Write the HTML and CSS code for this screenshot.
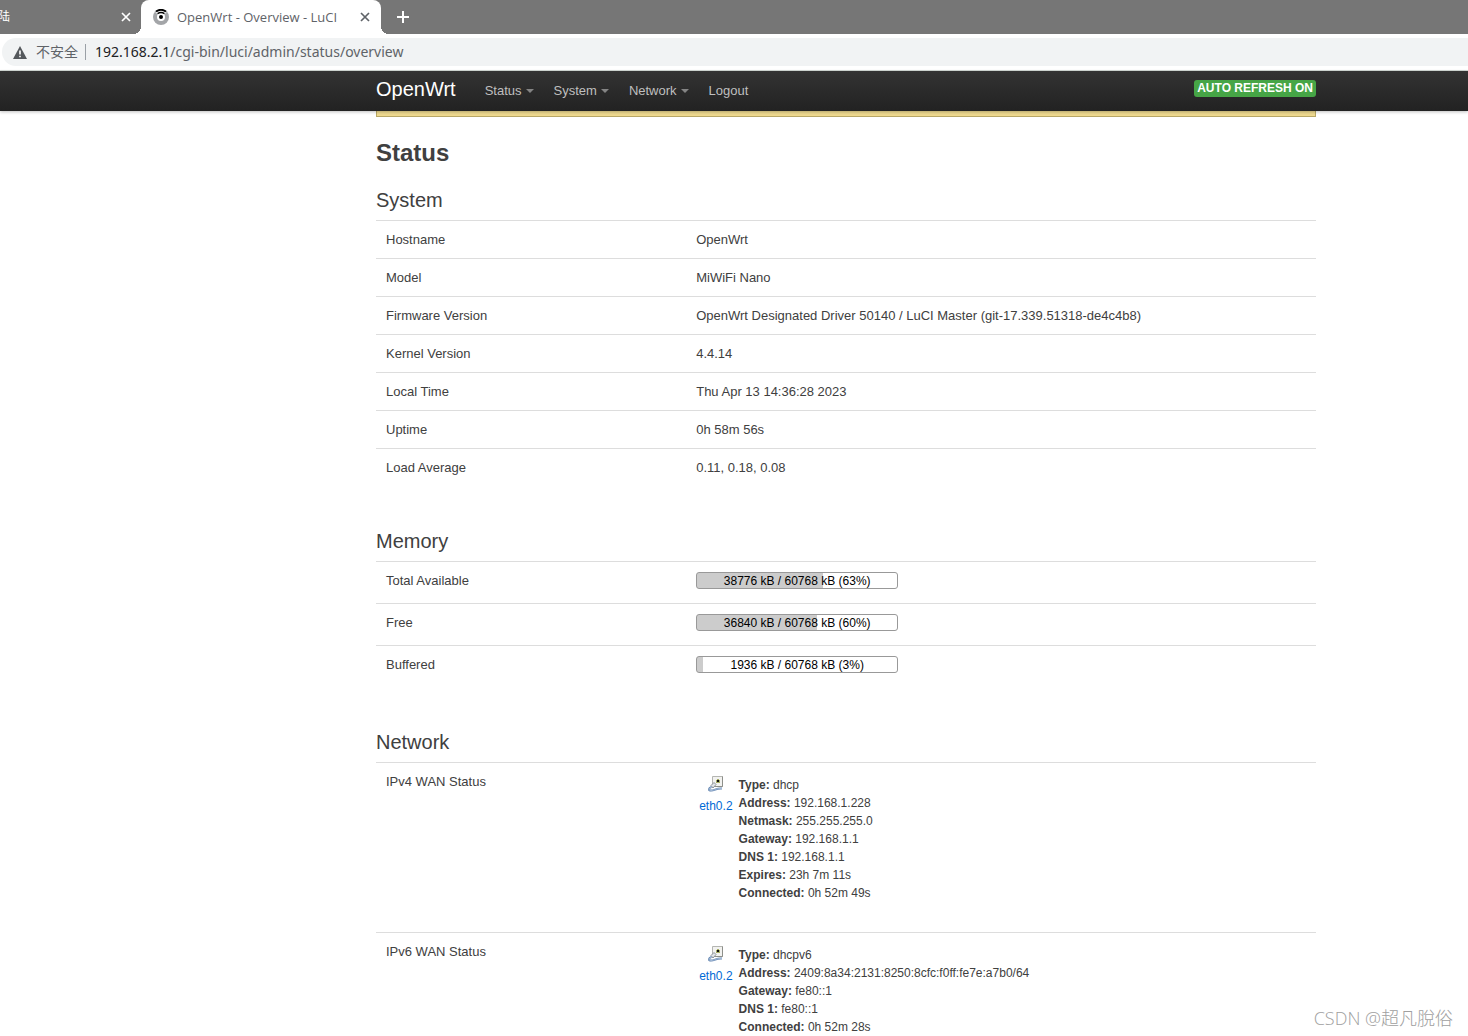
FILE: index.html
```html
<!DOCTYPE html>
<html lang="en">
<head>
<meta charset="utf-8">
<title>OpenWrt - Overview - LuCI</title>
<link rel="stylesheet" href="styles.css">
</head>
<body>
<svg width="0" height="0" class="defs" aria-hidden="true">
  <symbol id="cross" viewBox="0 0 10 10"><path d="M1 1 9 9M9 1 1 9" fill="none" stroke="currentColor" stroke-width="1.7"/></symbol>
  <symbol id="ethernet" viewBox="0 0 16 16">
    <path d="M4.500.500H14.500V10.500H4.500z" fill="#f2f2f0" stroke="#b4b5b1"/>
    <path d="M4.500 10.500H14.500V.500" fill="none" stroke="#8d8f8a"/>
    <path d="M8 4h1V3h2v1h1v3H8z" fill="#a5ac68"/>
    <path d="M9 4h2v2H9z" fill="#101010"/>
    <path d="M3 9.500 6 6.500 8 8.500 5 12z" fill="#e4e7ea" stroke="#8a929a"/>
    <path d="M3.500 11C.500 12 0 14.500 3 14.500C7 14.500 8 12 14 12.500" fill="none" stroke="#6384ae" stroke-width="2"/>
    <path d="M3.500 11C.500 12 0 14.500 3 14.500C7 14.500 8 12 14 12.500" fill="none" stroke="#b3c8e3" stroke-width=".8"/>
  </symbol>
</svg>
<div class="window">
  <header class="browser">
    <div class="tabs">
      <div class="tab">
        <span class="tab-title tab-title-cut">陆</span>
        <button class="tab-close" aria-label="Close tab"><svg width="10" height="10"><use href="#cross"/></svg></button>
      </div>
      <div class="tab tab-active">
        <svg class="favicon" width="16" height="16" viewBox="0 0 16 16">
          <circle cx="8" cy="8" r="8" fill="#a3a5a8"/>
          <circle cx="8" cy="8" r="4" fill="#fff"/>
          <path d="M2.500 3.500 8 8 13.500 3.500Q8-2 2.500 3.500z" fill="#fff"/>
          <circle cx="8" cy="8" r="2" fill="#000"/>
          <path d="M3 2.500Q8-1 13 2.500" fill="none" stroke="#000" stroke-width="1.800"/>
          <path d="M4.500 4.700Q8 2.500 11.500 4.700" fill="none" stroke="#000" stroke-width="1.500"/>
        </svg>
        <span class="tab-title">OpenWrt - Overview - LuCI</span>
        <button class="tab-close" aria-label="Close tab"><svg width="10" height="10"><use href="#cross"/></svg></button>
      </div>
      <button class="tab-new" aria-label="New tab"><svg width="12" height="12" viewBox="0 0 12 12"><path d="M6 0V12M0 6H12" stroke="currentColor" stroke-width="2"/></svg></button>
    </div>
    <div class="address">
      <svg width="14" height="13" viewBox="0 0 14 13"><path d="M7 0 14 13H0z" fill="#54585c"/><path d="M7 4.500V8.500M7 9.700V11.200" stroke="#fff" stroke-width="1.600"/></svg>
      <span class="insecure">不安全</span>
      <div class="url" role="textbox" aria-label="Address" contenteditable="true" spellcheck="false"><b>192.168.2.1</b>/cgi-bin/luci/admin/status/overview</div>
    </div>
  </header>
  <nav class="navbar">
    <div class="container navbar-inner">
      <a class="brand" href="#">OpenWrt</a>
      <a class="nav-link has-menu" href="#">Status</a>
      <a class="nav-link has-menu" href="#">System</a>
      <a class="nav-link has-menu" href="#">Network</a>
      <a class="nav-link" href="#">Logout</a>
      <button class="refresh">AUTO REFRESH ON</button>
    </div>
  </nav>
  <main class="page">
    <div class="container">
      <div class="alert"></div>
      <h1>Status</h1>
      <section>
        <h2>System</h2>
        <table class="data">
          <tr><th scope="row">Hostname</th><td>OpenWrt</td></tr>
          <tr><th scope="row">Model</th><td>MiWiFi Nano</td></tr>
          <tr><th scope="row">Firmware Version</th><td>OpenWrt Designated Driver 50140 / LuCI Master (git-17.339.51318-de4c4b8)</td></tr>
          <tr><th scope="row">Kernel Version</th><td>4.4.14</td></tr>
          <tr><th scope="row">Local Time</th><td>Thu Apr 13 14:36:28 2023</td></tr>
          <tr><th scope="row">Uptime</th><td>0h 58m 56s</td></tr>
          <tr><th scope="row">Load Average</th><td>0.11, 0.18, 0.08</td></tr>
        </table>
      </section>
      <section>
        <h2>Memory</h2>
        <table class="data">
          <tr><th scope="row">Total Available</th><td><div class="meter" style="--used:63%">38776 kB / 60768 kB (63%)</div></td></tr>
          <tr><th scope="row">Free</th><td><div class="meter" style="--used:60%">36840 kB / 60768 kB (60%)</div></td></tr>
          <tr><th scope="row">Buffered</th><td><div class="meter" style="--used:3%">1936 kB / 60768 kB (3%)</div></td></tr>
        </table>
      </section>
      <section>
        <h2>Network</h2>
        <table class="data">
          <tr><th scope="row">IPv4 WAN Status</th><td>
            <div class="wan">
              <div class="iface"><svg width="16" height="16"><use href="#ethernet"/></svg><a href="#">eth0.2</a></div>
              <div class="details">
                <div><strong>Type:</strong> dhcp</div>
                <div><strong>Address:</strong> 192.168.1.228</div>
                <div><strong>Netmask:</strong> 255.255.255.0</div>
                <div><strong>Gateway:</strong> 192.168.1.1</div>
                <div><strong>DNS 1:</strong> 192.168.1.1</div>
                <div><strong>Expires:</strong> 23h 7m 11s</div>
                <div><strong>Connected:</strong> 0h 52m 49s</div>
              </div>
            </div></td></tr>
          <tr><th scope="row">IPv6 WAN Status</th><td>
            <div class="wan">
              <div class="iface"><svg width="16" height="16"><use href="#ethernet"/></svg><a href="#">eth0.2</a></div>
              <div class="details">
                <div><strong>Type:</strong> dhcpv6</div>
                <div><strong>Address:</strong> 2409:8a34:2131:8250:8cfc:f0ff:fe7e:a7b0/64</div>
                <div><strong>Gateway:</strong> fe80::1</div>
                <div><strong>DNS 1:</strong> fe80::1</div>
                <div><strong>Connected:</strong> 0h 52m 28s</div>
              </div>
            </div></td></tr>
        </table>
      </section>
    </div>
  </main>
  <div class="watermark">CSDN @超凡脫俗</div>
</div>
</body>
</html>
```
FILE: styles.css
```css
* { box-sizing: border-box; }

body {
  margin: 0;
  background: #fff;
  color: #404040;
  font: 13px/18px "Liberation Sans", Arial, sans-serif;
}

button {
  border: 0;
  padding: 0;
  background: none;
  color: inherit;
  font: inherit;
}

a { color: #0069d6; text-decoration: none; }

svg { display: block; flex: none; }

.defs { position: absolute; }

.window {
  position: relative;
  display: flex;
  flex-direction: column;
  height: 100vh;
  overflow: hidden;
}

/* Browser chrome */
.browser {
  flex: none;
  border-bottom: 1px solid #d5dcd8;
  font-family: "Noto Sans", "Noto Sans CJK SC", sans-serif;
}

.tabs {
  display: flex;
  height: 34px;
  background: #767676;
  color: #fff;
}

.tab {
  display: flex;
  align-items: center;
  width: 141px;
  padding-right: 10px;
  font-size: 12px;
}

.tab-active {
  position: relative;
  width: 240px;
  padding-right: 11px;
  padding-left: 12px;
  border-radius: 8px 8px 0 0;
  background: #fff;
  color: #5f6368;
  font-family: "Open Sans", sans-serif;
  font-size: 13px;
}

.tab-active::before,
.tab-active::after {
  content: "";
  position: absolute;
  bottom: 0;
  width: 8px;
  height: 8px;
}

.tab-active::before {
  left: -8px;
  background: radial-gradient(circle at 0 0, transparent 8px, #fff 8px);
}

.tab-active::after {
  right: -8px;
  background: radial-gradient(circle at 100% 0, transparent 8px, #fff 8px);
}

.tab-title { margin-left: 8px; white-space: nowrap; }

.tab-title-cut {
  display: flex;
  justify-content: flex-end;
  width: 10px;
  margin-left: 0;
}

.tab-close { margin-left: auto; }

.tab-new { margin-left: 16px; }

.address {
  display: flex;
  align-items: center;
  height: 28px;
  margin: 4px 0 4px 2px;
  padding-left: 11px;
  border-radius: 14px 0 0 14px;
  background: #f1f3f4;
  color: #5f6368;
  font-size: 14px;
}

.insecure { margin: 0 7px 0 9px; }

.url {
  padding-left: 9px;
  border-left: 1px solid #9aa0a6;
  line-height: 16px;
  white-space: nowrap;
}

.url b { color: #202124; font-weight: 400; }

/* LuCI page */
.container {
  max-width: 940px;
  margin-left: 376px;
}

.navbar {
  position: relative;
  flex: none;
  background: linear-gradient(#333, #222);
  box-shadow: 0 1px 3px rgba(0, 0, 0, .25);
}

.navbar-inner {
  display: flex;
  align-items: center;
  height: 40px;
}

.brand {
  margin-right: 19px;
  padding-bottom: 4px;
  color: #fff;
  font-size: 20px;
}

.nav-link {
  display: flex;
  align-items: center;
  padding: 0 10px;
  color: #bfbfbf;
}

.has-menu::after {
  content: "";
  margin-left: 4px;
  border: 4px solid transparent;
  border-top-color: #848484;
  border-bottom: 0;
}

.refresh {
  margin: 0 0 6px auto;
  padding: 0 3px;
  border-radius: 3px;
  background: #46a546;
  color: #fff;
  font-size: 12px;
  font-weight: 700;
  line-height: 17px;
}

.page { flex: 1; min-height: 0; }

.alert {
  height: 6px;
  border: 1px solid #b8a765;
  border-top: 0;
  background: #eed98f;
}

h1, h2 { margin: 0; line-height: 36px; }

h1 { margin: 18px 0 11px; font-size: 24px; }

h2 { padding-bottom: 2px; font-size: 20px; font-weight: 400; }

section { margin-bottom: 37px; }

.data {
  width: 100%;
  border-spacing: 0;
  table-layout: fixed;
}

.data th,
.data td {
  padding: 10px 10px 9px;
  border-top: 1px solid #ddd;
  text-align: left;
  vertical-align: top;
}

.data th { width: 33%; font-weight: 400; }

.meter {
  width: 202px;
  height: 17px;
  margin-bottom: 5px;
  border: 1px solid #999;
  border-radius: 3px;
  background: linear-gradient(#ccc, #ccc) 0 0 / var(--used) 100% no-repeat;
  color: #000;
  font-size: 12px;
  line-height: 17px;
  text-align: center;
}

.wan {
  display: flex;
  gap: 6px;
  min-height: 150px;
  padding: 3px;
  font-size: 12px;
}

.iface {
  display: flex;
  flex-direction: column;
  align-items: center;
  gap: 5px;
}

.watermark {
  position: absolute;
  right: 15px;
  bottom: 6px;
  color: #a0a0a0;
  font: 300 18px/24px "Open Sans", "Noto Sans CJK TC", sans-serif;
}
```
